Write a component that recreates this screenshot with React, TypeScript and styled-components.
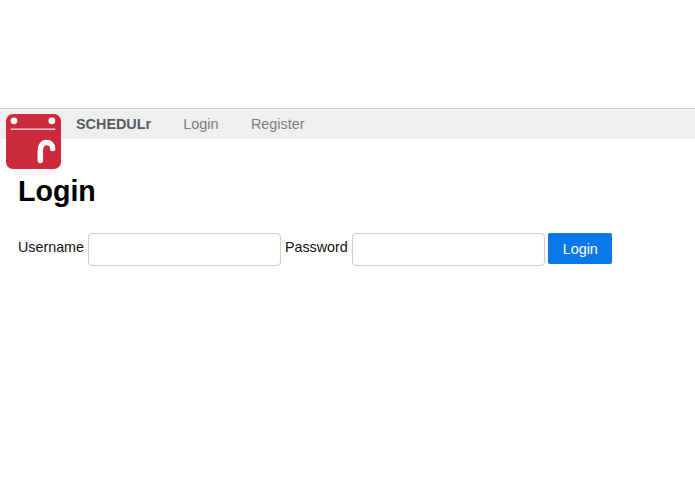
import styled, { createGlobalStyle } from "styled-components";

const GlobalStyle = createGlobalStyle`
  html, body {
    margin: 0;
    padding: 0;
    background: #ffffff;
    font-family: "Liberation Sans", Arial, sans-serif;
  }
`;

const Page = styled.div`
  padding-top: 108px;
  min-height: 386px;
`;

const Navbar = styled.nav`
  position: relative;
  display: flex;
  align-items: center;
  height: 30px;
  background-color: #efefef;
  border-top: 1px solid #d4d4d4;
  padding-left: 76px;
`;

const LogoMark = styled.svg`
  position: absolute;
  left: 6px;
  top: 5px;
  width: 55px;
  height: 55px;
`;

const Brand = styled.a`
  font-size: 14.4px;
  font-weight: 700;
  color: #565b60;
  margin-right: 32px;
`;

const NavLink = styled.a`
  font-size: 14.4px;
  color: #7d7d7d;
  margin-right: 32.5px;
`;

const Content = styled.main`
  padding: 0 18px;
`;

const Title = styled.h1`
  margin: 0;
  padding-top: 35px;
  font-size: 28.6px;
  line-height: 34px;
  font-weight: 700;
  color: #000000;
`;

const LoginForm = styled.form`
  display: flex;
  align-items: flex-start;
  gap: 4px;
  margin-top: 25px;
`;

const FieldLabel = styled.label`
  font-size: 14.3px;
  line-height: 29px;
  color: #111111;
`;

const TextInput = styled.input`
  box-sizing: border-box;
  width: 193px;
  height: 32.5px;
  border: 1px solid #cfcfcf;
  border-radius: 4px;
  box-shadow: inset 0 0 1px #dddddd;
  background: #ffffff;
`;

const SubmitButton = styled.button`
  box-sizing: border-box;
  width: 64px;
  height: 31px;
  margin-left: -0.5px;
  border: none;
  border-radius: 2px;
  background-color: #0878e6;
  color: #ffffff;
  font-family: inherit;
  font-size: 14.4px;
`;

export default function App() {
  return (
    <>
      <GlobalStyle />
      <Page>
        <Navbar>
          <LogoMark viewBox="0 0 55 55">
            <rect width="55" height="55" rx="7" fill="#cb2b3c" />
            <circle cx="8" cy="6.8" r="3.4" fill="#ffffff" />
            <circle cx="45.8" cy="6.8" r="3.4" fill="#ffffff" />
            <rect x="4.7" y="14.5" width="44.5" height="1.4" fill="#f4d5d8" />
            <path
              d="M34.3 46.5V37C34.3 31 37 28.5 40.5 28.5C44 28.5 46.7 31 46.7 34.5"
              fill="none"
              stroke="#ffffff"
              strokeWidth="5.5"
              strokeLinecap="round"
            />
          </LogoMark>
          <Brand>SCHEDULr</Brand>
          <NavLink>Login</NavLink>
          <NavLink>Register</NavLink>
        </Navbar>
        <Content>
          <Title>Login</Title>
          <LoginForm onSubmit={(e) => e.preventDefault()}>
            <FieldLabel>Username</FieldLabel>
            <TextInput type="text" />
            <FieldLabel>Password</FieldLabel>
            <TextInput type="password" />
            <SubmitButton type="submit">Login</SubmitButton>
          </LoginForm>
        </Content>
      </Page>
    </>
  );
}
